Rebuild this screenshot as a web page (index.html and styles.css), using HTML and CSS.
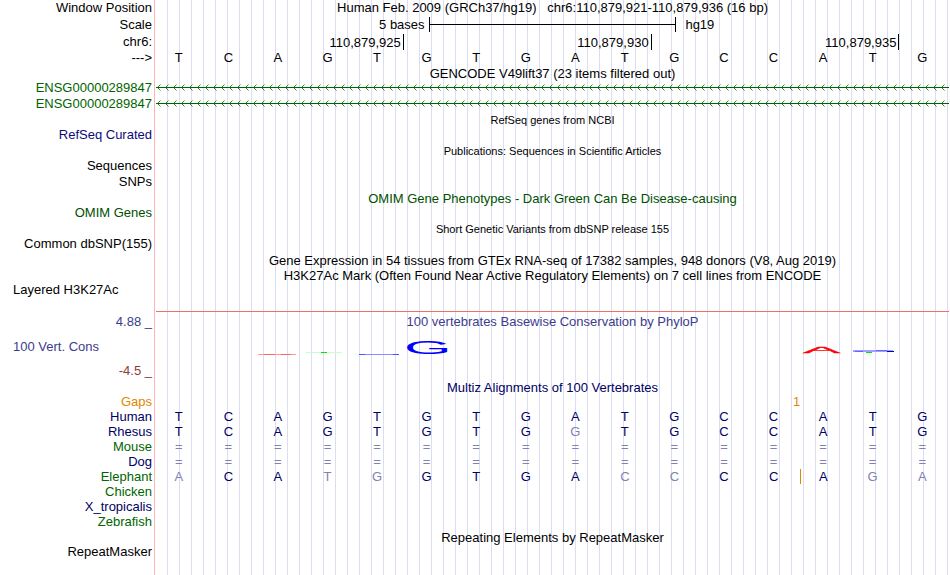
FILE: index.html
```html
<!DOCTYPE html>
<html lang="en">
<head>
  <meta charset="UTF-8">
  <title>Genome Browser - chr6:110,879,921-110,879,936</title>
  <meta name="viewport" content="width=device-width, initial-scale=1.0">
  <link rel="stylesheet" href="styles.css">
</head>
<body>
  <main class="browser">
    <!-- ruler -->
    <div class="row position">
      <span class="label">Window Position</span>
      <span class="title">Human Feb. 2009 (GRCh37/hg19)&nbsp;&nbsp; chr6:110,879,921-110,879,936 (16 bp)</span>
    </div>
    <div class="row ruler">
      <span class="label">Scale</span>
      <div class="scale">
        <span class="scale-size">5 bases</span>
        <span class="scale-bar"></span>
        <span class="scale-db">hg19</span>
      </div>
    </div>
    <div class="row ruler">
      <span class="label">chr6:</span>
      <div class="ticks">
        <span class="tick">110,879,925</span>
        <span class="tick">110,879,930</span>
        <span class="tick">110,879,935</span>
      </div>
    </div>
    <table class="bases ref">
      <tbody>
        <tr data-seq="TCAGTGTGATGCCATG"><th scope="row">---&gt;</th></tr>
      </tbody>
    </table>

    <!-- genes -->
    <h2 class="title">GENCODE V49lift37 (23 items filtered out)</h2>
    <div class="row">
      <span class="label green">ENSG00000289847</span>
      <svg class="gene" aria-hidden="true">
        <defs>
          <pattern id="intron" width="8" height="16" patternUnits="userSpaceOnUse">
            <path d="M0 7.5H8" stroke="#006400"/>
            <path d="M4.5 4.5L1.5 7.5L4.5 10.5" fill="none" stroke="#006400" stroke-width=".8"/>
          </pattern>
        </defs>
        <rect width="100%" height="16" fill="url(#intron)"/>
      </svg>
    </div>
    <div class="row">
      <span class="label green">ENSG00000289847</span>
      <svg class="gene" aria-hidden="true"><rect width="100%" height="16" fill="url(#intron)"/></svg>
    </div>
    <h2 class="title small">RefSeq genes from NCBI</h2>
    <div class="row"><span class="label blue">RefSeq Curated</span></div>
    <h2 class="title small">Publications: Sequences in Scientific Articles</h2>
    <div class="row"><span class="label">Sequences</span></div>
    <div class="row"><span class="label">SNPs</span></div>
    <h2 class="title omim">OMIM Gene Phenotypes - Dark Green Can Be Disease-causing</h2>
    <div class="row"><span class="label omim">OMIM Genes</span></div>
    <h2 class="title small">Short Genetic Variants from dbSNP release 155</h2>
    <div class="row"><span class="label">Common dbSNP(155)</span></div>

    <!-- expression and regulation -->
    <h2 class="title">Gene Expression in 54 tissues from GTEx RNA-seq of 17382 samples, 948 donors (V8, Aug 2019)</h2>
    <h2 class="title">H3K27Ac Mark (Often Found Near Active Regulatory Elements) on 7 cell lines from ENCODE</h2>
    <div class="row signal">
      <span class="label left">Layered H3K27Ac</span>
      <div class="baseline"></div>
    </div>

    <!-- conservation -->
    <section class="row cons">
      <div class="cons-axis">
        <span class="label phylop">4.88 _</span>
        <span class="label left phylop">100 Vert. Cons</span>
        <span class="label negative">-4.5 _</span>
      </div>
      <div class="cons-plot">
        <span class="phylop">100 vertebrates Basewise Conservation by PhyloP</span>
        <svg class="logo" viewBox="0 0 793 40" preserveAspectRatio="none">
          <g fill="none">
            <path d="M102 25.5H140" stroke="#ff9696"/>
            <path d="M108 25.5H119M125 25.5H135" stroke="#ff6464"/>
            <path d="M150 23.5H186" stroke="#c8ffc8"/>
            <path d="M165 23.5H171" stroke="#00e600"/>
            <path d="M203 25.5H243" stroke="#8c8cff"/>
            <path d="M203 25.5H209M237 25.5H243" stroke="#5050ff"/>
            <path d="M697 22H737" stroke="#a0a0ff" stroke-width="2"/>
            <path d="M699 22.5H707M720 21.5H731" stroke="#6464ff"/>
            <path d="M731 22.5H738" stroke="#0000c8"/>
            <path d="M710 23.5H716" stroke="#00e600"/>
          </g>
          <text transform="translate(248 25) scale(4.7 1.35)" fill="#0000ff">G</text>
          <text transform="translate(647 24) scale(4.3 .67)" fill="#ff0000" stroke="#ff0000" stroke-width=".4">A</text>
        </svg>
      </div>
    </section>

    <!-- alignment -->
    <h2 class="title navy">Multiz Alignments of 100 Vertebrates</h2>
    <table class="bases">
      <tbody>
        <tr class="gaps" data-seq="            1   "><th scope="row">Gaps</th></tr>
        <tr data-seq="TCAGTGTGATGCCATG"><th scope="row">Human</th></tr>
        <tr data-seq="TCAGTGTGgTGCCATG"><th scope="row">Rhesus</th></tr>
        <tr data-seq="================"><th scope="row" class="green">Mouse</th></tr>
        <tr data-seq="================"><th scope="row">Dog</th></tr>
        <tr data-seq="aCAtgGTGAccCCAga" data-insert="12"><th scope="row" class="green">Elephant</th></tr>
        <tr data-seq="                "><th scope="row" class="green">Chicken</th></tr>
        <tr data-seq="                "><th scope="row">X_tropicalis</th></tr>
        <tr data-seq="                "><th scope="row" class="green">Zebrafish</th></tr>
      </tbody>
    </table>

    <h2 class="title">Repeating Elements by RepeatMasker</h2>
    <div class="row"><span class="label">RepeatMasker</span></div>
  </main>

  <script>
    // one cell per base; lower case and "=" are drawn faded
    document.querySelectorAll('tr[data-seq]').forEach(row => {
      [...row.dataset.seq].forEach((base, i) => {
        const cell = row.insertCell();
        cell.textContent = base.trim().toUpperCase();
        if (/[a-z=]/.test(base)) cell.className = 'faded';
        if (row.dataset.insert === String(i)) cell.classList.add('insert');
      });
    });
  </script>
</body>
</html>
```

FILE: styles.css
```css
body {
  margin: 0;
  min-height: 100vh;
  color: #000;
  font-family: "Liberation Sans", Arial, Helvetica, sans-serif;
  font-size: 13px;
  line-height: 15px;
  background:
    linear-gradient(#ffb4b4, #ffb4b4) 154px 0 / 1px 100% no-repeat,
    repeating-linear-gradient(to right, transparent 0 11px, #dcdcf5 11px 12px) 156px 0 no-repeat,
    #fff;
}
.browser {
  padding-right: 1px;
}
.row {
  display: grid;
  grid-template-columns: 156px minmax(0, 1fr);
  min-height: 16px;
}
.ruler {
  height: 17px;
}
.label {
  padding-right: 4px;
  text-align: right;
  white-space: nowrap;
}
.ruler .label,
.tick {
  padding-top: 1px;
}
.label.left {
  padding-left: 13px;
  text-align: left;
}
.title {
  font-size: 13px;
  font-weight: normal;
  text-align: center;
  white-space: nowrap;
}
h2.title {
  box-sizing: border-box;
  height: 15px;
  margin: 0;
  padding: 1px 0 0 156px;
}
.title.small {
  font-size: 11px;
}

/* ruler */
.scale {
  display: grid;
  grid-template-columns: 1fr 31.25% 1fr;
  align-items: center;
}
.scale-size {
  padding-right: 4px;
  text-align: right;
}
.scale-db {
  padding-left: 9px;
}
.scale-bar {
  height: 15px;
  border: solid #000;
  border-width: 0 1px;
  background: linear-gradient(#000, #000) 0 7px / 100% 1px no-repeat;
}
.ticks {
  display: flex;
  align-items: center;
}
.tick {
  width: 31.25%;
  box-sizing: border-box;
  padding-right: 2px;
  border-right: 1px solid #000;
  text-align: right;
}

/* base letters */
.bases {
  width: 100%;
  table-layout: fixed;
  border-collapse: collapse;
  color: #000064;
}
.bases.ref {
  color: #000;
}
.bases th {
  width: 152px;
  height: 15px;
  padding: 0 4px 0 0;
  font-weight: normal;
  text-align: right;
}
.bases td {
  padding: 0 4px 0 0;
  text-align: center;
}
.bases .faded {
  color: #8282af;
}
.bases .insert {
  padding-right: 3px;
  border-right: 1px solid #e18700;
}
.bases .gaps {
  color: #e18700;
}
.bases .gaps td {
  padding-right: 0;
  text-align: right;
}

/* tracks */
.gene {
  display: block;
  width: 100%;
  height: 16px;
}
.signal {
  height: 30px;
}
.baseline {
  border-bottom: 1px solid #f06e64;
}
.cons {
  height: 67px;
}
.cons-axis {
  display: flex;
  flex-direction: column;
  justify-content: space-between;
  padding: 2px 0 1px;
}
.cons-plot {
  padding-top: 2px;
  text-align: center;
}
.logo {
  display: block;
  width: 100%;
  height: 40px;
}

.green,
.bases .green {
  color: #006400;
}
.omim {
  color: #005000;
}
.blue {
  color: #0c0c78;
}
.navy {
  color: #000064;
}
.phylop {
  color: #3c3c8c;
}
.negative {
  color: #8c3c3c;
}
```
